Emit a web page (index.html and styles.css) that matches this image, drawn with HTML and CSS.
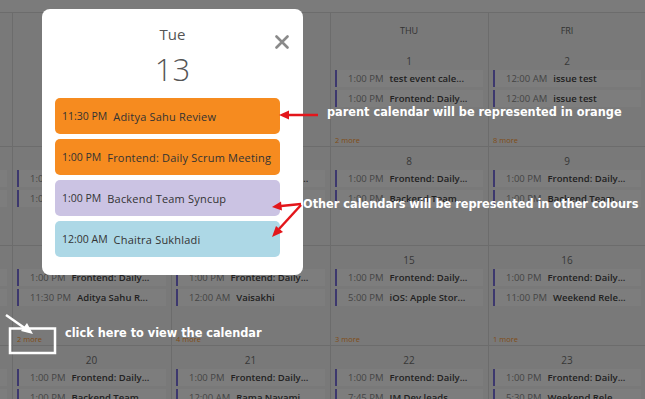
FILE: index.html
```html
<!DOCTYPE html>
<html lang="en">
  <head>
    <meta charset="UTF-8" />
    <meta name="viewport" content="width=device-width, initial-scale=1.0" />
    <title>Calendar</title>
    <link rel="stylesheet" href="styles.css">
  </head>
  <body>
    <div class="page">
      <div class="toolbar"></div>

      <div class="calendar">
        <!-- week 1 -->
        <div class="cell"><div class="dow">MON</div><div class="date">29</div></div>
        <div class="cell"><div class="dow">TUE</div><div class="date">30</div></div>
        <div class="cell"><div class="dow">WED</div><div class="date">31</div></div>
        <div class="cell">
          <div class="dow">THU</div><div class="date">1</div>
          <div class="event"><span class="time">1:00 PM</span><span class="title">test event cale...</span></div>
          <div class="event"><span class="time">1:00 PM</span><span class="title">Frontend: Daily...</span></div>
          <div class="more">2 more</div>
        </div>
        <div class="cell">
          <div class="dow">FRI</div><div class="date">2</div>
          <div class="event"><span class="time">12:00 AM</span><span class="title">issue test</span></div>
          <div class="event"><span class="time">12:00 AM</span><span class="title">issue test</span></div>
          <div class="more">8 more</div>
        </div>

        <!-- week 2 -->
        <div class="cell">
          <div class="date">5</div>
          <div class="event"><span class="time">1:00 PM</span><span class="title">Frontend: Daily...</span></div>
          <div class="event"><span class="time">1:00 PM</span><span class="title">Backend Team...</span></div>
        </div>
        <div class="cell">
          <div class="date">6</div>
          <div class="event"><span class="time">1:00 PM</span><span class="title">Frontend: Daily...</span></div>
          <div class="event"><span class="time">1:00 PM</span><span class="title">Backend Team...</span></div>
        </div>
        <div class="cell">
          <div class="date">7</div>
          <div class="event"><span class="time">1:00 PM</span><span class="title">Frontend: Daily...</span></div>
          <div class="event"><span class="time">1:00 PM</span><span class="title">Team Syncup</span></div>
        </div>
        <div class="cell">
          <div class="date">8</div>
          <div class="event"><span class="time">1:00 PM</span><span class="title">Frontend: Daily...</span></div>
          <div class="event"><span class="time">1:00 PM</span><span class="title">Backend Team...</span></div>
        </div>
        <div class="cell">
          <div class="date">9</div>
          <div class="event"><span class="time">1:00 PM</span><span class="title">Frontend: Daily...</span></div>
          <div class="event"><span class="time">1:00 PM</span><span class="title">Backend Team...</span></div>
        </div>

        <!-- week 3 -->
        <div class="cell">
          <div class="date">12</div>
          <div class="event"><span class="time">1:00 PM</span><span class="title">Frontend: Daily...</span></div>
          <div class="event"><span class="time">1:00 PM</span><span class="title">Backend Team...</span></div>
        </div>
        <div class="cell">
          <div class="date">13</div>
          <div class="event"><span class="time">1:00 PM</span><span class="title">Frontend: Daily...</span></div>
          <div class="event"><span class="time">11:30 PM</span><span class="title">Aditya Sahu R...</span></div>
          <div class="more">2 more</div>
        </div>
        <div class="cell">
          <div class="date">14</div>
          <div class="event"><span class="time">1:00 PM</span><span class="title">Frontend: Daily...</span></div>
          <div class="event"><span class="time">12:00 AM</span><span class="title">Vaisakhi</span></div>
          <div class="more">4 more</div>
        </div>
        <div class="cell">
          <div class="date">15</div>
          <div class="event"><span class="time">1:00 PM</span><span class="title">Frontend: Daily...</span></div>
          <div class="event"><span class="time">5:00 PM</span><span class="title">iOS: Apple Stor...</span></div>
          <div class="more">3 more</div>
        </div>
        <div class="cell">
          <div class="date">16</div>
          <div class="event"><span class="time">1:00 PM</span><span class="title">Frontend: Daily...</span></div>
          <div class="event"><span class="time">11:00 PM</span><span class="title">Weekend Rele...</span></div>
          <div class="more">1 more</div>
        </div>

        <!-- week 4 -->
        <div class="cell">
          <div class="date">19</div>
          <div class="event"><span class="time">1:00 PM</span><span class="title">Frontend: Daily...</span></div>
          <div class="event"><span class="time">1:00 PM</span><span class="title">Backend Team...</span></div>
        </div>
        <div class="cell">
          <div class="date">20</div>
          <div class="event"><span class="time">1:00 PM</span><span class="title">Frontend: Daily...</span></div>
          <div class="event"><span class="time">1:00 PM</span><span class="title">Backend Team...</span></div>
        </div>
        <div class="cell">
          <div class="date">21</div>
          <div class="event"><span class="time">1:00 PM</span><span class="title">Frontend: Daily...</span></div>
          <div class="event"><span class="time">12:00 AM</span><span class="title">Rama Navami</span></div>
        </div>
        <div class="cell">
          <div class="date">22</div>
          <div class="event"><span class="time">1:00 PM</span><span class="title">Frontend: Daily...</span></div>
          <div class="event"><span class="time">7:45 PM</span><span class="title">JM Dev leads</span></div>
        </div>
        <div class="cell">
          <div class="date">23</div>
          <div class="event"><span class="time">1:00 PM</span><span class="title">Frontend: Daily...</span></div>
          <div class="event"><span class="time">5:30 PM</span><span class="title">Weekend Rele...</span></div>
        </div>
      </div>

      <div class="backdrop"></div>

      <div class="modal">
        <button class="close" aria-label="Close">
          <svg width="14" height="14" viewBox="0 0 14 14">
            <path d="M1.5 1.5 L12.5 12.5 M12.5 1.5 L1.5 12.5" stroke="#8a8a8a" stroke-width="2.6" stroke-linecap="round" fill="none" />
          </svg>
        </button>
        <div class="modal-day">Tue</div>
        <div class="modal-date">13</div>
        <div class="modal-events">
          <div class="pill pill-orange"><span class="pill-time">11:30 PM</span>Aditya Sahu Review</div>
          <div class="pill pill-orange"><span class="pill-time">1:00 PM</span>Frontend: Daily Scrum Meeting</div>
          <div class="pill pill-purple"><span class="pill-time">1:00 PM</span>Backend Team Syncup</div>
          <div class="pill pill-blue"><span class="pill-time">12:00 AM</span>Chaitra Sukhladi</div>
        </div>
      </div>

      <!-- annotations -->
      <svg class="arrows" width="645" height="399" viewBox="0 0 645 399">
        <g stroke="#e3161b" stroke-width="2.5" fill="#e3161b">
          <line x1="318" y1="115" x2="286" y2="115" />
          <polygon points="279,115 289,110.5 289,119.5" stroke="none" />
          <line x1="301" y1="204" x2="281" y2="206" />
          <polygon points="272,207 281,201.5 282,210.5" stroke="none" />
          <line x1="301" y1="205" x2="279" y2="229" />
          <polygon points="272,237 276,226 283,232" stroke="none" />
        </g>
        <g stroke="#ffffff" stroke-width="2.5" fill="#ffffff">
          <line x1="6" y1="315" x2="26" y2="329" />
          <polygon points="33,334 21,331 27,323" stroke="none" />
          <rect x="10" y="328.5" width="45" height="24.5" fill="none" />
        </g>
      </svg>
      <div class="note note-parent">parent calendar will be represented in orange</div>
      <div class="note note-other">Other calendars will be represented in other colours</div>
      <div class="note note-click">click here to view the calendar</div>
    </div>
  </body>
</html>
```

FILE: styles.css
```css
body {
  margin: 0;
  font-family: "Open Sans", sans-serif;
  background-color: #fff;
}
.page {
  position: relative;
  width: 645px;
  height: 399px;
  overflow: hidden;
}
.toolbar {
  height: 12px;
  background-color: #f6f6f6;
}
.calendar {
  display: grid;
  grid-template-columns: 159px 159px 159px 158px 158px;
  grid-template-rows: 134px 99px 100px 100px;
  margin-left: -146px;
  border-top: 1px solid #d9d9d9;
  background-color: #f3f3f3;
}
.cell {
  display: flex;
  flex-direction: column;
  padding: 7px 5px 0 4px;
  border-right: 1px solid #d9d9d9;
  border-bottom: 1px solid #d9d9d9;
  box-sizing: border-box;
  overflow: hidden;
}
.dow {
  margin-top: 4px;
  margin-bottom: 16px;
  text-align: center;
  font-size: 9px;
  line-height: 14px;
  color: #666;
}
.date {
  margin-bottom: 2px;
  text-align: center;
  font-size: 10px;
  line-height: 14px;
  color: #707070;
}
.event {
  display: flex;
  align-items: center;
  height: 17px;
  margin-bottom: 3px;
  padding-left: 11px;
  border-left: 2.5px solid #7a70dc;
  background-color: #fbfbfb;
  font-size: 9.5px;
  white-space: nowrap;
}
.time {
  margin-right: 6px;
  color: #8a8a8a;
}
.title {
  font-weight: 600;
  color: #444;
}
.more {
  margin-top: auto;
  padding-bottom: 1px;
  font-size: 7.5px;
  line-height: 10px;
  color: #ff9a30;
}
.backdrop {
  position: absolute;
  inset: 0;
  background-color: rgba(0, 0, 0, 0.5);
}
.modal {
  position: absolute;
  left: 42px;
  top: 9px;
  width: 261px;
  height: 266px;
  padding: 15px 0 0 13px;
  box-sizing: border-box;
  background-color: #fff;
  border-radius: 8px;
  display: flex;
  flex-direction: column;
}
.close {
  position: absolute;
  top: 26px;
  right: 14px;
  width: 14px;
  height: 14px;
  padding: 0;
  border: none;
  background: none;
}
.close svg {
  display: block;
}
.modal-day {
  width: 235px;
  text-align: center;
  font-size: 15px;
  line-height: 20px;
  color: #555;
}
.modal-date {
  width: 235px;
  margin-top: 5px;
  text-align: center;
  font-size: 31px;
  font-weight: 300;
  line-height: 40px;
  color: #555;
}
.modal-events {
  display: flex;
  flex-direction: column;
  gap: 5px;
  margin-top: 9px;
}
.pill {
  display: flex;
  align-items: center;
  width: 225px;
  height: 36px;
  padding-left: 7px;
  box-sizing: border-box;
  border-radius: 5px;
  font-size: 11px;
  letter-spacing: 0.2px;
  color: #333;
  white-space: nowrap;
}
.pill-time {
  margin-right: 6px;
  font-size: 10.5px;
  letter-spacing: 0;
}
.pill-orange {
  background-color: #f68b1f;
}
.pill-purple {
  background-color: #cbc3e3;
}
.pill-blue {
  background-color: #add8e6;
}
.arrows {
  position: absolute;
  left: 0;
  top: 0;
}
.note {
  position: absolute;
  color: #fff;
  font-family: "DejaVu Sans", sans-serif;
  font-stretch: condensed;
  font-weight: 700;
  font-size: 12.6px;
  line-height: 16px;
  white-space: nowrap;
}
.note-parent {
  left: 327px;
  top: 104px;
}
.note-other {
  left: 303px;
  top: 196px;
}
.note-click {
  left: 65px;
  top: 325px;
}
```
